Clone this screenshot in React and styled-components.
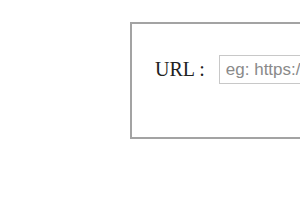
import React from 'react';
import styled, { createGlobalStyle } from 'styled-components';

const GlobalStyle = createGlobalStyle`
	body {
		margin: 0;
		background: #ffffff;
		font-family: "Liberation Serif", "Times New Roman", serif;
	}
`;

const Page = styled.div`
	padding: 22px 0 0 130px;
	width: 300px;
	height: 210px;
	box-sizing: border-box;
	overflow: hidden;
`;

const Panel = styled.div`
	width: 320px;
	height: 117px;
	box-sizing: border-box;
	border: 2px solid #a3a3a3;
	padding: 31px 23px;
`;

const Row = styled.form`
	display: flex;
	align-items: center;
	gap: 14px;
	margin: 0;
`;

const Label = styled.label`
	font-family: "Liberation Serif", "Times New Roman", serif;
	font-size: 20px;
	color: #222;
	white-space: nowrap;
`;

const UrlInput = styled.input`
	width: 220px;
	height: 29px;
	box-sizing: border-box;
	border: 1px solid #c8c8c8;
	padding: 2px 6px;
	font-family: "Liberation Sans", Arial, sans-serif;
	font-size: 17px;
	outline: none;

	&::placeholder {
		color: #8a8a8a;
	}
`;

const App = () => (
	<Page>
		<GlobalStyle />
		<Panel>
			<Row onSubmit={(e) => e.preventDefault()}>
				<Label htmlFor="url">URL :</Label>
				<UrlInput id="url" type="text" placeholder="eg: https://www.example.com" />
			</Row>
		</Panel>
	</Page>
);

export default App;
